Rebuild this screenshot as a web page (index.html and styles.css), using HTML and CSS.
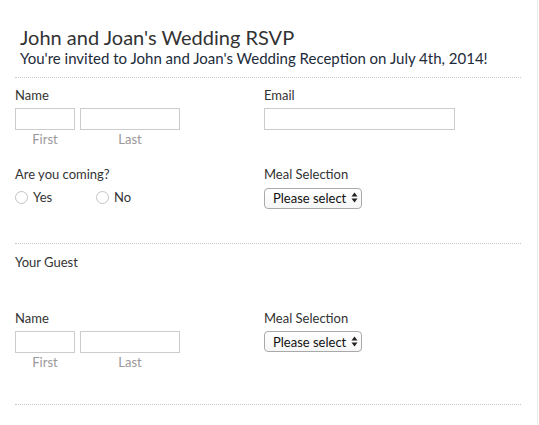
FILE: index.html
```html
<!DOCTYPE html>
<html lang="en">
<head>
    <meta charset="UTF-8">
    <meta name="viewport" content="width=device-width, initial-scale=1.0">
    <title>John and Joan's Wedding RSVP</title>
    <link rel="stylesheet" href="styles.css">
</head>
<body>
    <div class="page">
        <header>
            <h1>John and Joan's Wedding RSVP</h1>
            <p class="intro">You're invited to John and Joan's Wedding Reception on July 4th, 2014!</p>
        </header>
        <div class="divider"></div>

        <div class="row first-row">
            <div class="field">
                <label>Name</label>
                <div class="name-inputs">
                    <div class="sub first"><input type="text"><span>First</span></div>
                    <div class="sub last"><input type="text"><span>Last</span></div>
                </div>
            </div>
            <div class="field">
                <label>Email</label>
                <input type="text" class="email">
            </div>
        </div>

        <div class="row second-row">
            <div class="field">
                <label>Are you coming?</label>
                <div class="radios">
                    <label class="radio"><input type="radio" name="coming"> Yes</label>
                    <label class="radio"><input type="radio" name="coming"> No</label>
                </div>
            </div>
            <div class="field">
                <label>Meal Selection</label>
                <div class="select-wrap">
                    <select><option>Please select</option></select>
                    <svg class="arrows" width="7" height="11" viewBox="0 0 7 11"><path d="M0.5 4.5 L3.5 0.5 L6.5 4.5 Z M0.5 6.5 L3.5 10.5 L6.5 6.5 Z" fill="#222"/></svg>
                </div>
            </div>
        </div>

        <div class="divider mid"></div>

        <h2 class="guest-title">Your Guest</h2>

        <div class="row guest-row">
            <div class="field">
                <label>Name</label>
                <div class="name-inputs">
                    <div class="sub first"><input type="text"><span>First</span></div>
                    <div class="sub last"><input type="text"><span>Last</span></div>
                </div>
            </div>
            <div class="field">
                <label>Meal Selection</label>
                <div class="select-wrap">
                    <select><option>Please select</option></select>
                    <svg class="arrows" width="7" height="11" viewBox="0 0 7 11"><path d="M0.5 4.5 L3.5 0.5 L6.5 4.5 Z M0.5 6.5 L3.5 10.5 L6.5 6.5 Z" fill="#222"/></svg>
                </div>
            </div>
        </div>

        <div class="divider bottom"></div>
    </div>
</body>
</html>
```

FILE: styles.css
```css
body {
    margin: 0;
    padding: 0;
    font-family: Lato, "Open Sans", sans-serif;
    background-color: #fff;
    color: #333;
}
.page {
    width: 537px;
    height: 425px;
    border-right: 1px solid #ececec;
    overflow: hidden;
}
header {
    padding: 25px 0 0 20px;
}
h1 {
    margin: 0;
    font-size: 20px;
    line-height: 24px;
    font-weight: normal;
    color: #333;
}
.intro {
    margin: 0;
    font-size: 15px;
    line-height: 19px;
    color: #1d2b3a;
}
.divider {
    margin: 9px 16px 0 15px;
    border-top: 1px dotted #c8c8c8;
}
.divider.mid {
    margin-top: 34px;
}
.divider.bottom {
    margin-top: 33px;
}
.row {
    display: grid;
    grid-template-columns: 249px 1fr;
    padding-left: 15px;
}
.first-row {
    margin-top: 9px;
}
.second-row {
    margin-top: 18px;
}
.guest-row {
    margin-top: 40px;
}
.field > label {
    display: block;
    font-size: 13px;
    line-height: 16px;
    color: #333;
    margin-bottom: 5px;
}
.name-inputs {
    display: flex;
    gap: 5px;
}
.sub {
    display: flex;
    flex-direction: column;
    align-items: center;
}
.sub span {
    font-size: 13px;
    line-height: 17px;
    padding-top: 1px;
    color: #999;
}
input[type=text] {
    box-sizing: border-box;
    height: 22px;
    margin: 0;
    border: 1px solid #ccc;
    padding: 2px 4px;
    font-family: inherit;
}
.sub.first input {
    width: 60px;
}
.sub.last input {
    width: 100px;
}
.email {
    width: 191px;
}
.radios {
    display: flex;
    margin-top: 7px;
}
.radio {
    display: flex;
    align-items: center;
    gap: 5px;
    font-size: 13px;
    line-height: 16px;
    color: #333;
    width: 81px;
}
.radio input {
    appearance: none;
    margin: 0;
    width: 13px;
    height: 13px;
    border: 1px solid #c4c4c4;
    border-radius: 50%;
    background: #fff;
    box-sizing: border-box;
}
.select-wrap {
    position: relative;
    width: 98px;
    margin-top: 2px;
}
.select-wrap select {
    appearance: none;
    box-sizing: border-box;
    width: 98px;
    height: 21px;
    margin: 0;
    padding: 0 0 0 8px;
    border: 1px solid #a9a9a9;
    border-radius: 4px;
    background: linear-gradient(#fff, #f6f6f6);
    font-family: inherit;
    font-size: 13px;
    color: #111;
}
.arrows {
    position: absolute;
    right: 4px;
    top: 5px;
    pointer-events: none;
}
.guest-title {
    margin: 10px 0 0 15px;
    font-size: 13px;
    line-height: 16px;
    font-weight: normal;
    color: #333;
}
```
